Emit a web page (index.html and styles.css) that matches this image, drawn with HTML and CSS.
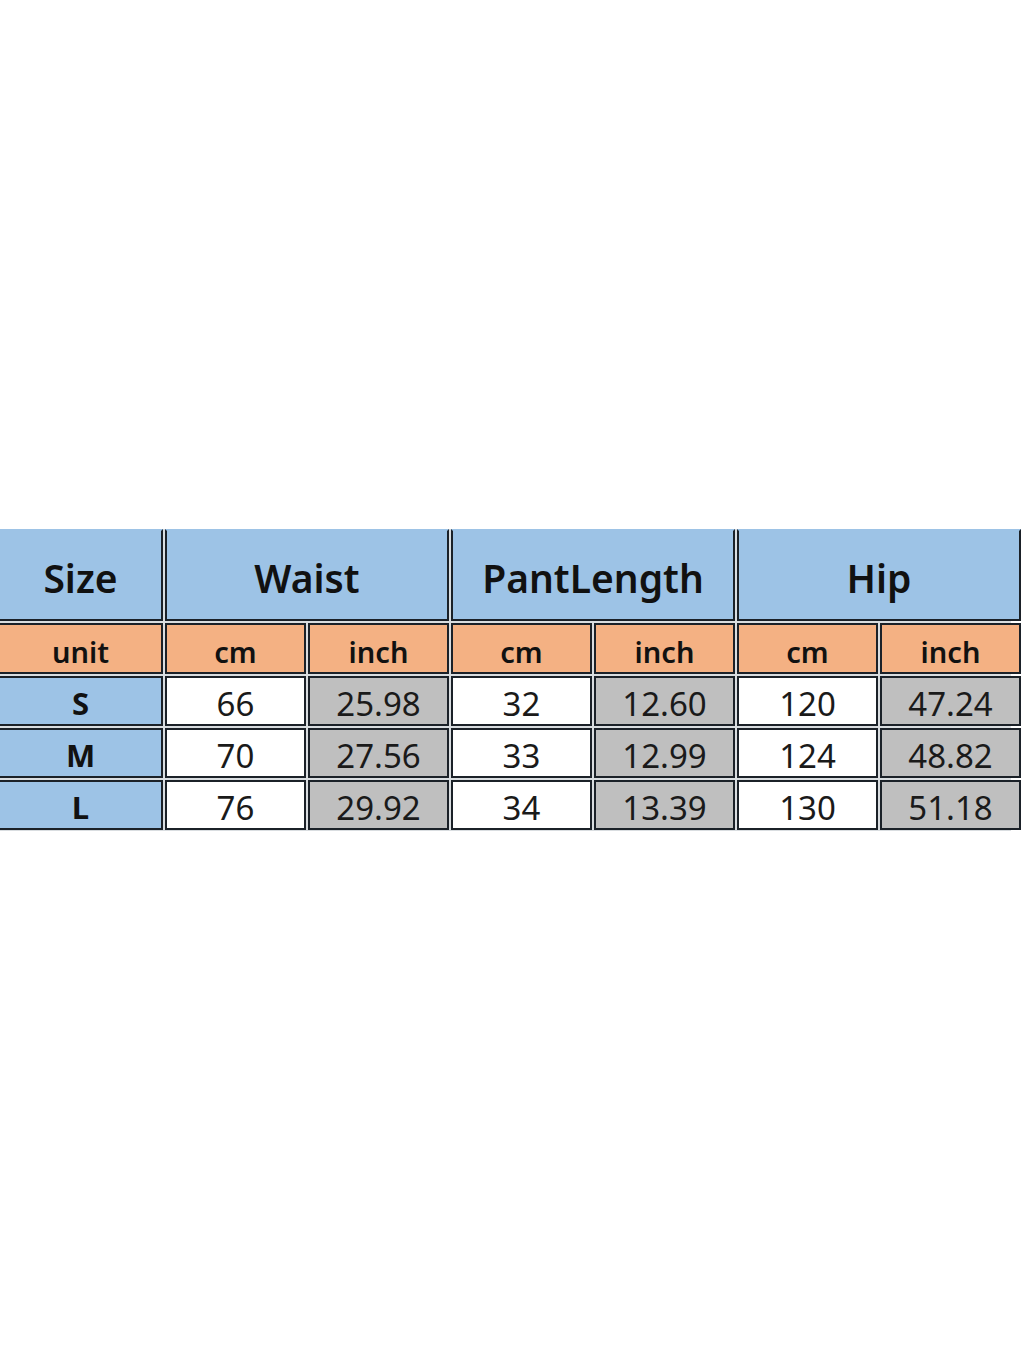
FILE: index.html
```html
<!DOCTYPE html>
<html>
<head>
<meta charset="utf-8">
<link rel="stylesheet" href="styles.css">
</head>
<body>
<div class="page">
  <div class="chart">
    <div class="cell head">Size</div>
    <div class="cell head span2">Waist</div>
    <div class="cell head span2">PantLength</div>
    <div class="cell head span2">Hip</div>

    <div class="cell unit">unit</div>
    <div class="cell unit">cm</div>
    <div class="cell unit">inch</div>
    <div class="cell unit">cm</div>
    <div class="cell unit">inch</div>
    <div class="cell unit">cm</div>
    <div class="cell unit">inch</div>

    <div class="cell size">S</div>
    <div class="cell num">66</div>
    <div class="cell num grey">25.98</div>
    <div class="cell num">32</div>
    <div class="cell num grey">12.60</div>
    <div class="cell num">120</div>
    <div class="cell num grey">47.24</div>

    <div class="cell size">M</div>
    <div class="cell num">70</div>
    <div class="cell num grey">27.56</div>
    <div class="cell num">33</div>
    <div class="cell num grey">12.99</div>
    <div class="cell num">124</div>
    <div class="cell num grey">48.82</div>

    <div class="cell size">L</div>
    <div class="cell num">76</div>
    <div class="cell num grey">29.92</div>
    <div class="cell num">34</div>
    <div class="cell num grey">13.39</div>
    <div class="cell num">130</div>
    <div class="cell num grey">51.18</div>
  </div>
</div>
</body>
</html>
```

FILE: styles.css
```css
html, body {
  margin: 0;
  padding: 0;
  background: #ffffff;
}
body {
  width: 1024px;
  height: 1365px;
  overflow: hidden;
  font-family: "Noto Sans", "Open Sans", sans-serif;
}
.page {
  padding-top: 529px;
}
.chart {
  display: grid;
  grid-template-columns: 165px repeat(6, 141px);
  grid-template-rows: 92px 51px 50px 50px 50px;
  gap: 2px;
  margin-left: -2px;
  width: 1013px;
  background: #d9dde0;
  padding-bottom: 1px;
}
.cell {
  box-sizing: border-box;
  border: 2px solid #1b2128;
  display: flex;
  align-items: center;
  justify-content: center;
  color: #111111;
  line-height: 1;
}
.span2 {
  grid-column: span 2;
}
.head {
  background: #9dc3e6;
  font-size: 39px;
  font-weight: 600;
  border-top-color: #9dc3e6;
  padding-top: 4px;
}
.unit {
  background: #f4b183;
  font-size: 29px;
  font-weight: 600;
  padding-top: 6px;
}
.size {
  background: #9dc3e6;
  font-size: 31px;
  font-weight: 700;
  padding-top: 4px;
}
.num {
  background: #ffffff;
  font-size: 33px;
  font-weight: 400;
  color: #1a1a1a;
  padding-top: 4px;
}
.grey {
  background: #bfbfbf;
}
```
